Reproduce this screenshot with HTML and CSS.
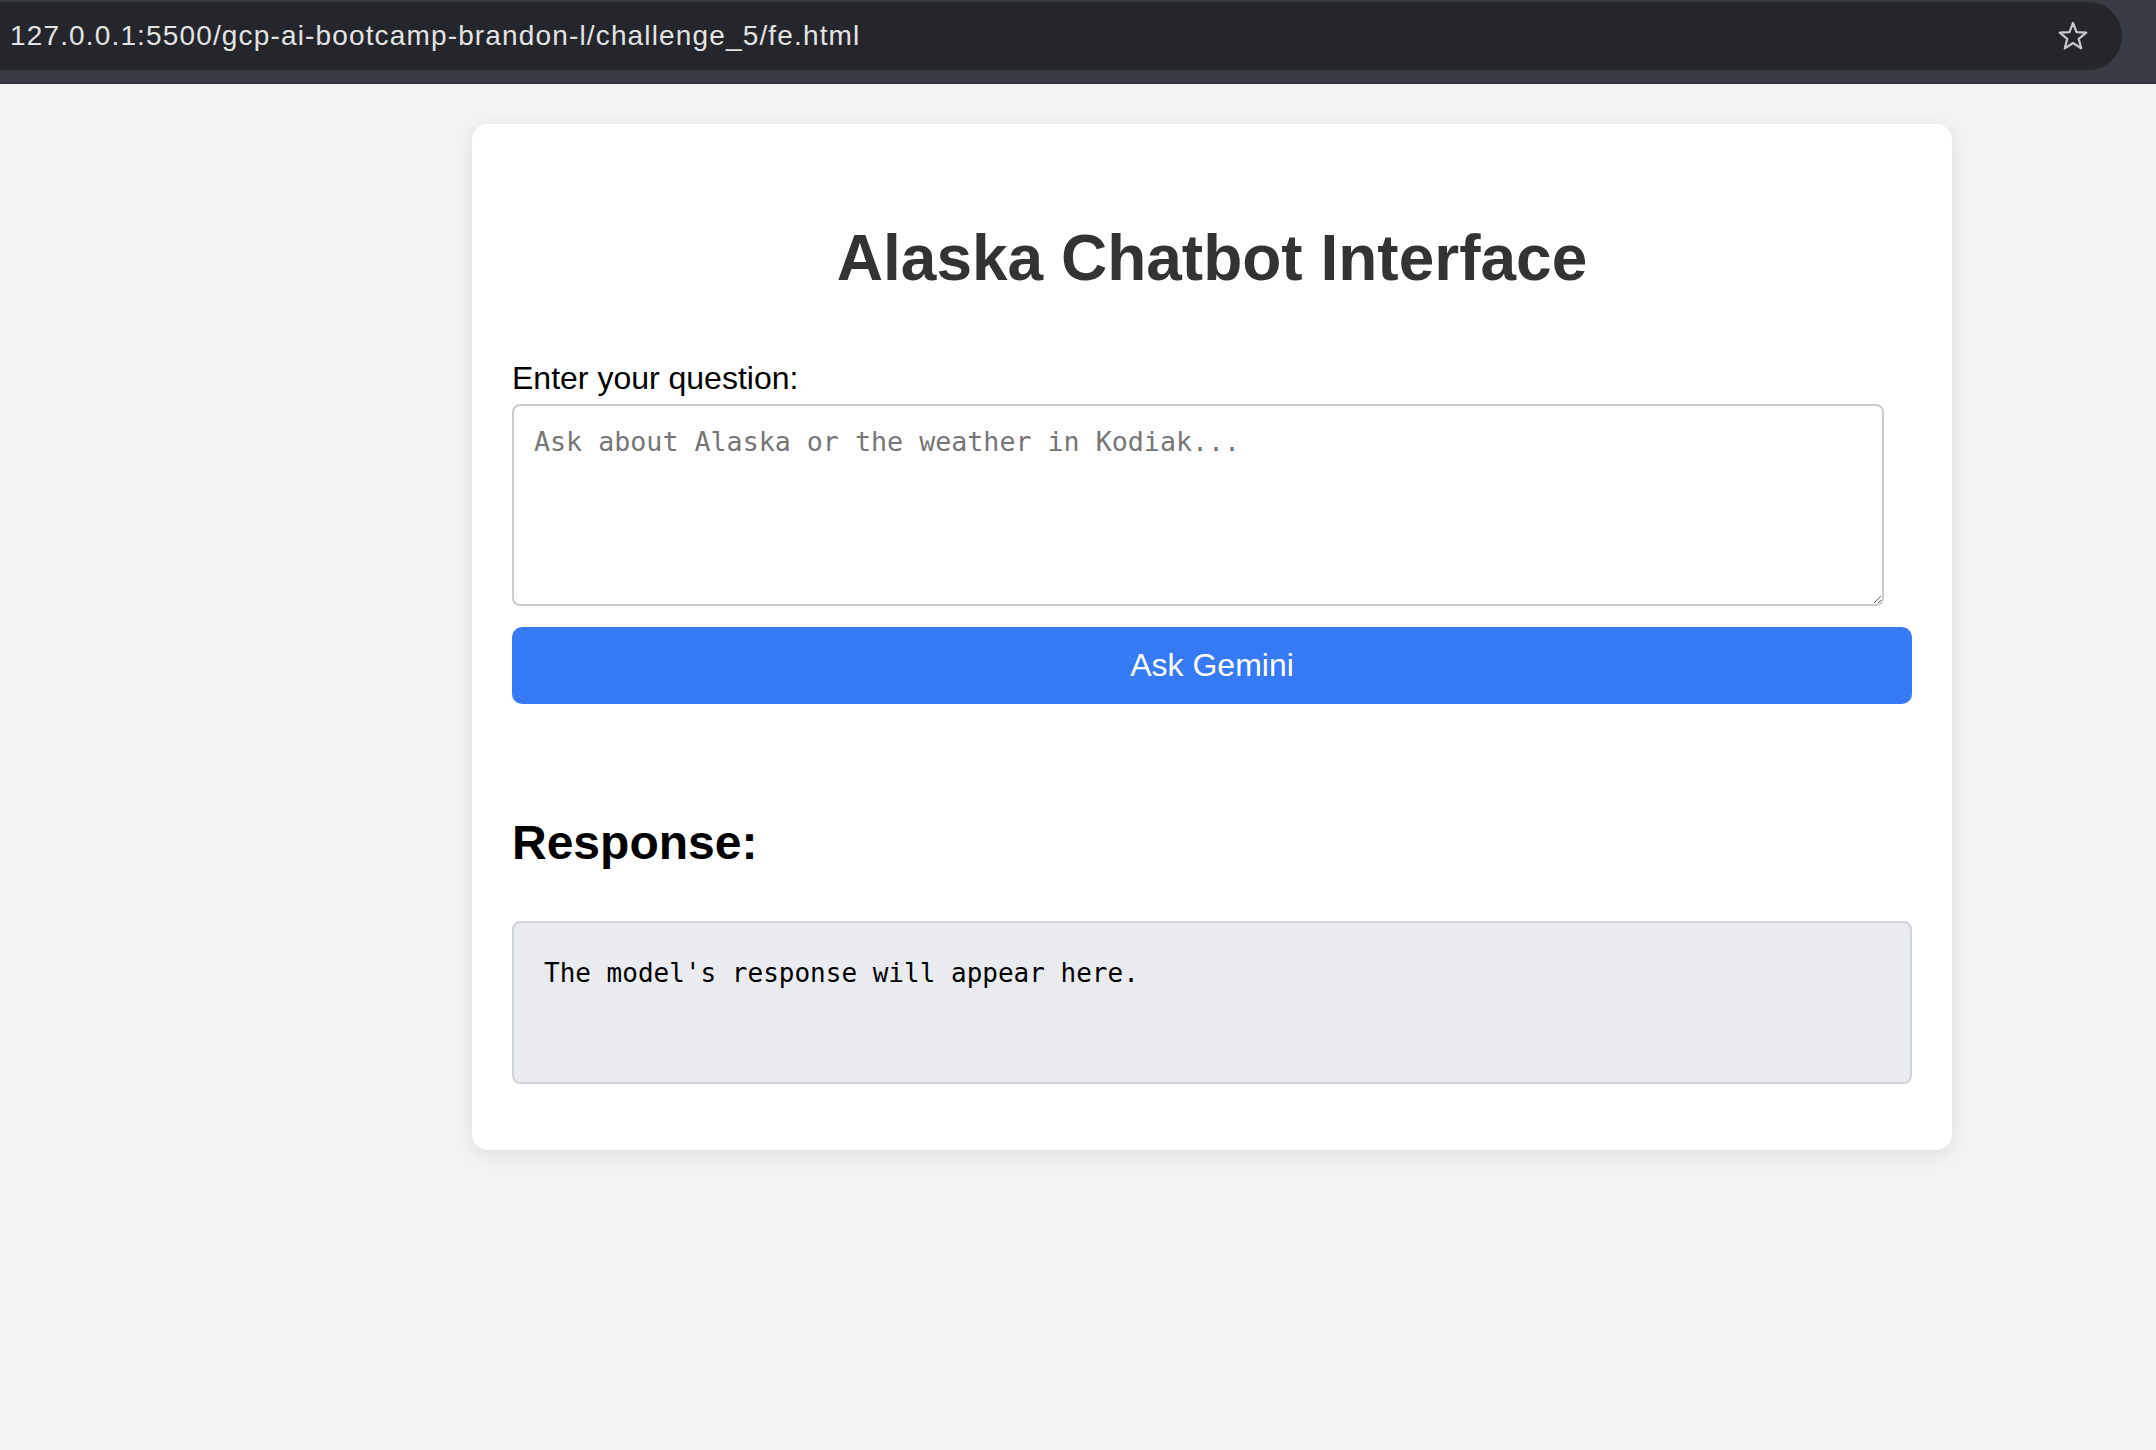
FILE: index.html
```html
<!DOCTYPE html>
<html lang="en">
<head>
<meta charset="utf-8">
<title>Alaska Chatbot Interface</title>
<link rel="stylesheet" href="styles.css">
</head>
<body>
<div class="chrome">
  <div class="omnibox">
    <span class="url">127.0.0.1:5500/gcp-ai-bootcamp-brandon-l/challenge_5/fe.html</span>
    <svg class="star" width="32" height="32" viewBox="0 0 32 32" aria-hidden="true">
      <polygon points="16,3 19.53,12.15 29.31,12.67 21.71,18.85 24.23,28.33 16,23 7.77,28.33 10.29,18.85 2.69,12.67 12.47,12.15" fill="none" stroke="#c9c9cc" stroke-width="2.2" stroke-linejoin="round"/>
    </svg>
  </div>
</div>
<main class="page">
  <div class="card">
    <h1 class="title">Alaska Chatbot Interface</h1>
    <label class="label" for="q">Enter your question:</label>
    <textarea class="question" id="q" placeholder="Ask about Alaska or the weather in Kodiak..."></textarea>
    <button class="ask" type="button">Ask Gemini</button>
    <h2 class="resp-title">Response:</h2>
    <div class="response">The model's response will appear here.</div>
  </div>
</main>
</body>
</html>
```

FILE: styles.css
```css
html, body {
  margin: 0;
  padding: 0;
}
body {
  background: #f3f3f3;
  font-family: "Liberation Sans", Arial, sans-serif;
  min-height: 1450px;
}
.chrome {
  box-sizing: border-box;
  height: 84px;
  background: #383b42;
  padding-top: 2px;
  border-bottom: 2px solid #2f3137;
}
.omnibox {
  box-sizing: border-box;
  width: 2122px;
  height: 68px;
  background: #25262b;
  border-radius: 0 34px 34px 0;
  display: flex;
  align-items: center;
  justify-content: space-between;
  padding: 0 33px 0 10px;
}
.url {
  color: #e3e3e3;
  font-size: 28px;
  font-family: "Liberation Sans", Arial, sans-serif;
  letter-spacing: 1.15px;
}
.star {
  display: block;
}
.page {
  padding: 40px 0 0 472px;
}
.card {
  box-sizing: border-box;
  width: 1480px;
  background: #ffffff;
  border-radius: 16px;
  box-shadow: 0 4px 18px rgba(0, 0, 0, 0.09);
  padding: 40px 40px 66px 40px;
}
.title {
  margin: 57px 0 0 0;
  font-size: 64px;
  line-height: 74px;
  font-weight: bold;
  color: #333333;
  text-align: center;
}
.label {
  display: block;
  margin-top: 65px;
  font-size: 32px;
  line-height: 37px;
  color: #000000;
}
.question {
  display: block;
  box-sizing: border-box;
  width: 98%;
  height: 202px;
  margin: 7px 0 0 0;
  padding: 20px;
  border: 2px solid #cccccc;
  border-radius: 8px;
  font-family: "DejaVu Sans Mono", "Liberation Mono", monospace;
  font-size: 26.67px;
  color: #000;
  background: #fff;
}
.question::placeholder {
  color: #767676;
}
.ask {
  display: block;
  width: 100%;
  height: 77px;
  margin-top: 21px;
  border: none;
  border-radius: 10px;
  background: #367af6;
  color: #ffffff;
  font-family: "Liberation Sans", Arial, sans-serif;
  font-size: 32px;
  line-height: 37px;
  padding: 0;
}
.resp-title {
  margin: 111px 0 0 0;
  font-size: 48px;
  line-height: 55px;
  font-weight: bold;
  color: #000000;
}
.response {
  box-sizing: border-box;
  height: 163px;
  margin-top: 51px;
  padding: 35px 30px 30px 30px;
  border: 2px solid #d1d4d9;
  border-radius: 8px;
  background: #eaebef;
  font-family: "DejaVu Sans Mono", "Liberation Mono", monospace;
  font-size: 26px;
  line-height: 30px;
  color: #000000;
  white-space: pre-wrap;
}
```
